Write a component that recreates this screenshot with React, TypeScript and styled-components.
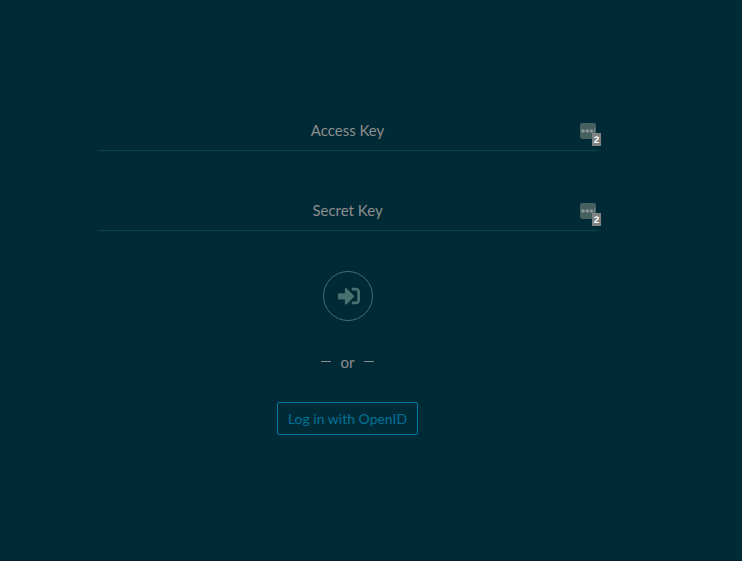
import React from "react";
import styled, { createGlobalStyle } from "styled-components";
import { FaSignInAlt } from "react-icons/fa";

const GlobalStyle = createGlobalStyle`
  * { box-sizing: border-box; }
  html, body { margin: 0; background: #002a36; }
  body { font-family: Lato, sans-serif; font-size: 15px; color: #8e8e8e; overflow: hidden; }
`;

const Page = styled.main`
  height: 561px;
  padding: 116px 144px 0 98px;
  border-bottom: 1px solid #00212c;
`;

const Form = styled.form`
  display: flex;
  flex-direction: column;
  align-items: center;
  width: 500px;
`;

const Field = styled.div`
  position: relative;
  width: 500px;
  height: 35px;
  margin-bottom: 45px;
  border-bottom: 1px solid #07434c;
`;

const Input = styled.input`
  display: block;
  width: 499px;
  height: 28px;
  padding: 0;
  border: 0;
  outline: 0;
  background: transparent;
  color: #8e8e8e;
  font: 15px Lato, sans-serif;
  text-align: center;
  &::placeholder { color: #8e8e8e; opacity: 1; }
`;

const Manager = styled.svg`
  position: absolute;
  right: 0;
  top: 7px;
  width: 18px;
  height: 16px;
`;

const Badge = styled.svg`
  position: absolute;
  right: -3px;
  top: 17px;
  width: 9px;
  height: 13px;
  background: #7f8283;
`;

const Count = styled.text`
  fill: #fff;
  font: bold 9.8px "Liberation Sans", sans-serif;
  text-anchor: middle;
  text-rendering: geometricPrecision;
`;

const SubmitButton = styled.button`
  display: flex;
  align-items: center;
  justify-content: center;
  width: 50px;
  height: 50px;
  margin-top: -5px;
  padding: 0 0 0 2px;
  border: 1px solid #47706f;
  border-radius: 50%;
  background: transparent;
  color: #47706f;
`;

const Divider = styled.div`
  display: flex;
  align-items: center;
  justify-content: center;
  width: 53px;
  height: 18px;
  margin: 32px 1px 0 0;
  gap: 9.5px;
`;

const Dash = styled.span`
  flex: none;
  width: 10px;
  height: 1px;
  margin-bottom: 1px;
  background: #8e8e8e;
`;

const OpenIdButton = styled.button`
  width: 141px;
  height: 33px;
  margin: 31px 1px 0 0;
  padding: 0;
  border: 1px solid #007ba3;
  border-radius: 2px;
  background: transparent;
  color: #007299;
  font: 14px Lato, sans-serif;
`;

function KeyField({ label, type }: { label: string; type: string }) {
  return (
    <Field>
      <Input type={type} placeholder={label} aria-label={label} />
      <Manager viewBox="0 0 18 16">
        <rect width="16" height="16" rx="2" fill="#44605f" />
        <g fill="#8b9797">
          <circle cx="3" cy="8" r="1.8" />
          <circle cx="7.3" cy="8" r="1.8" />
          <circle cx="11.5" cy="8" r="1.8" />
          <rect x="14" y="5" width="1" height="6" opacity=".7" />
        </g>
      </Manager>
      <Badge viewBox="0 0 9 13">
        <Count x="4.5" y="10">2</Count>
      </Badge>
    </Field>
  );
}

export default function App() {
  return (
    <Page>
      <GlobalStyle />
      <Form>
        <KeyField label="Access Key" type="text" />
        <KeyField label="Secret Key" type="password" />
        <SubmitButton type="button" aria-label="Sign in">
          <FaSignInAlt size={22} />
        </SubmitButton>
        <Divider>
          <Dash />
          <span>or</span>
          <Dash />
        </Divider>
        <OpenIdButton type="button">Log in with OpenID</OpenIdButton>
      </Form>
    </Page>
  );
}
